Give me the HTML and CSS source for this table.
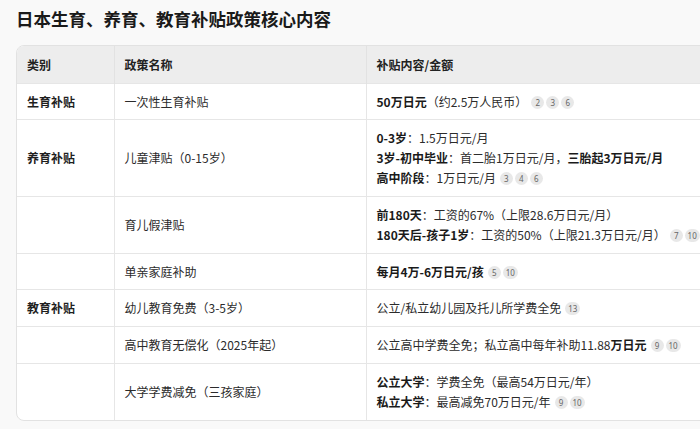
FILE: index.html
```
<!DOCTYPE html>
<html lang="zh">
<head>
<meta charset="utf-8">
<title>日本生育、养育、教育补贴政策核心内容</title>
<link rel="stylesheet" href="styles.css">
</head>
<body>
<div class="page">
  <h1 class="title">日本生育、养育、教育补贴政策核心内容</h1>
  <div class="table-wrap">
    <table class="policy">
      <colgroup>
        <col class="c1"><col class="c2"><col class="c3">
      </colgroup>
      <thead>
        <tr><th>类别</th><th>政策名称</th><th>补贴内容/金额</th></tr>
      </thead>
      <tbody>
        <tr class="tight">
          <td class="cat">生育补贴</td>
          <td>一次性生育补贴</td>
          <td><b>50万日元</b>（约2.5万人民币）<span class="refs"><span class="ref">2</span><span class="ref">3</span><span class="ref">6</span></span></td>
        </tr>
        <tr>
          <td class="cat">养育补贴</td>
          <td>儿童津贴（0-15岁）</td>
          <td><b>0-3岁</b>：1.5万日元/月<br><b>3岁-初中毕业</b>：首二胎1万日元/月，<b>三胎起3万日元/月</b><br><b>高中阶段</b>：1万日元/月<span class="refs"><span class="ref">3</span><span class="ref">4</span><span class="ref">6</span></span></td>
        </tr>
        <tr>
          <td class="cat"></td>
          <td>育儿假津贴</td>
          <td><b>前180天</b>：工资的67%（上限28.6万日元/月）<br><b>180天后-孩子1岁</b>：工资的50%（上限21.3万日元/月）<span class="refs"><span class="ref">7</span><span class="ref wide">10</span></span></td>
        </tr>
        <tr class="tight">
          <td class="cat"></td>
          <td>单亲家庭补助</td>
          <td><b>每月4万-6万日元/孩</b><span class="refs"><span class="ref">5</span><span class="ref wide">10</span></span></td>
        </tr>
        <tr>
          <td class="cat">教育补贴</td>
          <td>幼儿教育免费（3-5岁）</td>
          <td>公立/私立幼儿园及托儿所学费全免<span class="refs"><span class="ref wide">13</span></span></td>
        </tr>
        <tr>
          <td class="cat"></td>
          <td>高中教育无偿化（2025年起）</td>
          <td>公立高中学费全免；私立高中每年补助11.88<b>万日元</b><span class="refs"><span class="ref">9</span><span class="ref wide">10</span></span></td>
        </tr>
        <tr>
          <td class="cat"></td>
          <td>大学学费减免（三孩家庭）</td>
          <td><b>公立大学</b>：学费全免（最高54万日元/年）<br><b>私立大学</b>：最高减免70万日元/年<span class="refs"><span class="ref">9</span><span class="ref wide">10</span></span></td>
        </tr>
      </tbody>
    </table>
  </div>
</div>
</body>
</html>
```
FILE: styles.css
```
html, body {
  margin: 0;
  padding: 0;
  overflow: hidden;
  background: #f9f9f9;
}
body {
  font-family: "Noto Sans CJK SC", "Noto Sans", sans-serif;
  color: #2b2b2b;
}
.page {
  padding: 7px 0 0 16px;
  width: 740px;
}
.title {
  margin: 0 0 14px 0;
  font-size: 17.5px;
  line-height: 24px;
  font-weight: 700;
  color: #1a1a1a;
}
.table-wrap {
  width: 720px;
  border: 1px solid #e2e2e2;
  border-radius: 8px;
  overflow: hidden;
  background: #fff;
}
.policy {
  width: 100%;
  border-collapse: collapse;
  table-layout: fixed;
  font-size: 12px;
  line-height: 20px;
}
.c1 { width: 97px; }
.c2 { width: 252px; }
.policy th {
  background: #ededed;
  text-align: left;
  font-weight: 700;
  color: #222;
  padding: 9px 10px 8px 10px;
  border-left: 1px solid #e2e2e2;
}
.policy td {
  padding: 8px 10px 8px 10px;
  border-top: 1px solid #e6e6e6;
  border-left: 1px solid #e6e6e6;
  vertical-align: middle;
  white-space: nowrap;
}
.policy tr.tight td {
  padding-bottom: 7px;
}
.policy th:first-child,
.policy td:first-child {
  border-left: none;
}
.policy thead th { border-top: none; }
.policy td.cat {
  font-weight: 700;
  color: #1f1f1f;
}
.policy b {
  font-weight: 700;
  color: #1a1a1a;
}
.refs {
  display: inline-flex;
  gap: 2px;
  margin-left: 4px;
  vertical-align: 1px;
}
.ref {
  display: inline-block;
  min-width: 13px;
  height: 13px;
  padding: 0 1px;
  box-sizing: border-box;
  border-radius: 7px;
  background: #e8e8e8;
  color: #666;
  font-family: "Noto Sans", sans-serif;
  font-size: 8px;
  line-height: 13px;
  text-align: center;
}
.ref.wide {
  min-width: 15px;
  padding: 0 2px;
}
```
